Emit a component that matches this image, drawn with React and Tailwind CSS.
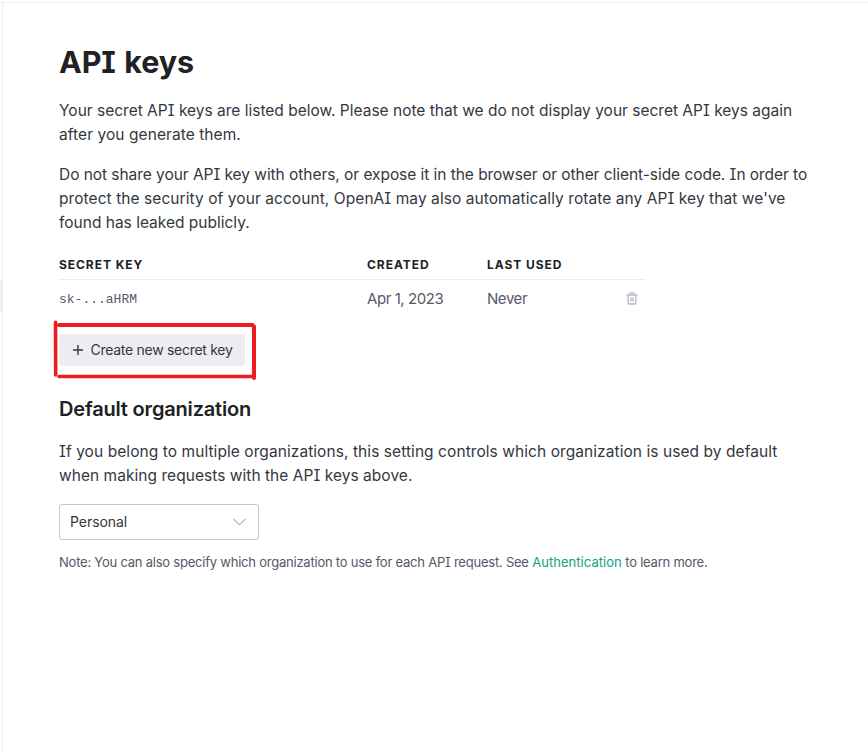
function Line({ children, className = "" }) {
  return <span className={"whitespace-nowrap " + className}>{children}</span>;
}

function TrashIcon() {
  return (
    <svg className="ml-px" width="12" height="13" viewBox="0 0 12 13" fill="none" stroke="#b9b9cb" strokeWidth="1.3">
      <path d="M0.9 3H11.1" strokeLinecap="round" />
      <path d="M4 2.8V0.9H8V2.8" strokeLinejoin="round" />
      <path d="M1.9 3.2L2.3 11.2Q2.4 12 3.2 12H8.8Q9.6 12 9.7 11.2L10.1 3.2" />
      <path d="M4.9 5.4V9.8M7.1 5.4V9.8" strokeWidth="1.3" />
    </svg>
  );
}

function Highlight() {
  return (
    <svg className="pointer-events-none absolute -left-[7px] -top-[15px]" width="208" height="64" viewBox="52 319 208 64" fill="none" stroke="#ec1c1f" strokeLinecap="round">
      <path d="M55.5 322.3L55.7 375" strokeWidth="3.6" />
      <path d="M59 325H252.5" strokeWidth="4" />
      <path d="M254 326.5V378" strokeWidth="4" />
      <path d="M59 376.5H252" strokeWidth="3.4" />
    </svg>
  );
}

export default function App() {
  return (
    <div className="flex h-[752px] w-[868px] flex-col overflow-hidden bg-white font-['Inter',sans-serif] text-[15.5px] leading-6 text-[#353740] [font-feature-settings:'cv08']">
      <div className="h-[3px] shrink-0 border-b border-[#ececf1]" />
      <div className="flex flex-1">
        <div className="w-[3px] shrink-0 border-r border-[#ececf1] pt-[277px]">
          <div className="h-8 bg-[#e6f4f1]" />
        </div>
        <main className="flex flex-col items-start pl-14 pt-[39px]">
          <h1 className="text-[30.5px] font-bold leading-10 tracking-[-0.1px] text-[#202123] [word-spacing:1.4px]">API keys</h1>
          <p className="mt-[17px] flex flex-col items-start">
            <Line>Your secret API keys are listed below. Please note that we do not display your secret API keys again</Line>
            <Line className="tracking-[0.07px]">after you generate them.</Line>
          </p>
          <p className="mt-4 flex flex-col items-start">
            <Line className="tracking-[-0.05px]">Do not share your API key with others, or expose it in the browser or other client-side code. In order to</Line>
            <Line className="tracking-[0.07px]">protect the security of your account, OpenAI may also automatically rotate any API key that we've</Line>
            <Line>found has leaked publicly.</Line>
          </p>

          <div className="mt-4 w-[586px]">
            <div className="grid h-[29px] grid-cols-[308px_120px_1fr] items-center border-b border-[#ececec] text-[12px] font-bold tracking-[0.95px] text-[#202123]">
              <span>SECRET KEY</span>
              <span>CREATED</span>
              <span>LAST USED</span>
            </div>
            <div className="grid h-[37px] grid-cols-[308px_120px_1fr_20px] items-center text-[15px] tracking-[-0.43px] text-[#565869]">
              <span className="pt-0.5 font-['Liberation_Mono',monospace] text-[13px] tracking-normal">sk-...aHRM</span>
              <span>Apr 1, 2023</span>
              <span>Never</span>
              <TrashIcon />
            </div>
          </div>

          <div className="relative mt-[17px]">
            <button className="flex h-8 w-[186px] items-center rounded-[3px] bg-[#ececf1] pl-3.5 text-[14px] tracking-[-0.28px]">
              <svg width="10" height="10" viewBox="0 0 10 10" stroke="#353740" strokeWidth="1.4">
                <path d="M5 0V10M0 5H10" />
              </svg>
              <span className="ml-[7.5px] whitespace-nowrap">Create new secret key</span>
            </button>
            <Highlight />
          </div>

          <h2 className="mt-[31px] text-[20px] font-semibold tracking-[-0.18px] text-[#202123]">Default organization</h2>
          <p className="mt-[19px] flex flex-col items-start">
            <Line className="tracking-[0.07px]">If you belong to multiple organizations, this setting controls which organization is used by default</Line>
            <Line className="tracking-[0.04px]">when making requests with the API keys above.</Line>
          </p>
          <div className="mt-4 flex h-9 w-[200px] items-center justify-between rounded-[3px] border border-[#c5c5d2] pl-2.5 pr-3 text-[14px] tracking-[-0.05px]">
            <span>Personal</span>
            <svg width="13" height="8" viewBox="0 0 13 8" fill="none" stroke="#acacbe" strokeWidth="1.1">
              <path d="M0.5 0.8L6.5 6.8L12.5 0.8" />
            </svg>
          </div>
          <p className="mt-2.5 whitespace-pre text-[13px] tracking-[-0.225px] text-[#565869]">
            Note: You can also specify which organization to use for each API request. See <a className="tracking-[0.05px] text-[#10a37f]">Authentication</a> to learn more.
          </p>
        </main>
      </div>
    </div>
  );
}
